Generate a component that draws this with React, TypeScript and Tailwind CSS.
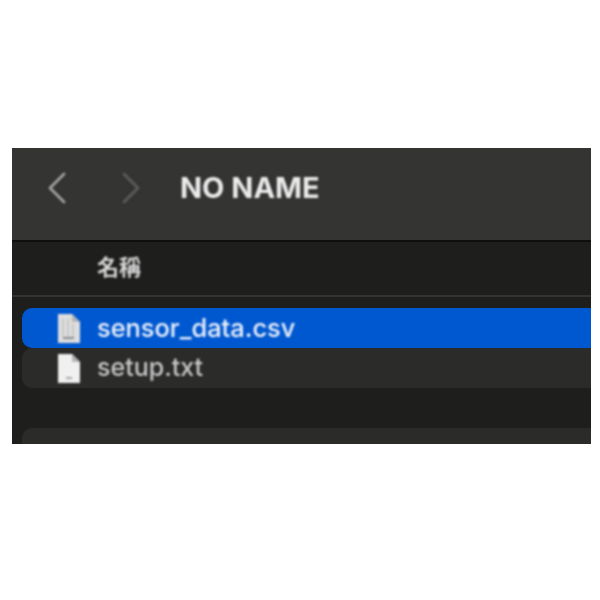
function FileIcon({ csv }: { csv?: boolean }) {
  return (
    <svg width="22" height="29" viewBox="0 0 22 29" className="shrink-0">
      <path d="M0 0h14l8 8v21H0z" fill={csv ? "#dedede" : "#f0f0f0"} />
      <path d="M14 0v8h8z" fill="#b5b5b5" />
      {csv ? (
        <g fill="#c8c8c8">
          <rect x="4" y="5" width="2" height="18" />
          <rect x="9" y="5" width="2" height="18" />
          <rect x="14" y="10" width="2" height="13" />
          <rect x="5" y="23" width="11" height="2" fill="#8c8c8c" />
        </g>
      ) : (
        <rect x="8" y="23" width="6" height="2" fill="#a8a8a8" />
      )}
    </svg>
  );
}

export default function App() {
  return (
    <div className="h-[600px] w-[600px] bg-white pl-[12px] pr-[9px] pt-[148px] font-['Inter','Noto_Sans_CJK_JP',sans-serif]">
      <div className="flex h-[296px] flex-col overflow-hidden bg-[#1e1e1d]">
        <div className="flex h-[92px] shrink-0 items-center bg-[#343433] pb-[12px]">
          <svg width="20" height="32" viewBox="0 0 20 32" className="ml-[35px] blur-[1px]" fill="none" stroke="#a3a3a3" strokeWidth="2.8" strokeLinecap="round" strokeLinejoin="round">
            <path d="M17 2 3 16l14 14" />
          </svg>
          <svg width="20" height="32" viewBox="0 0 20 32" className="ml-[54px] blur-[1px]" fill="none" stroke="#5c5c5b" strokeWidth="2.8" strokeLinecap="round" strokeLinejoin="round">
            <path d="m3 2 14 14L3 30" />
          </svg>
          <span className="ml-[39px] text-[29px] font-bold text-[#ececec] blur-[0.8px]">NO NAME</span>
        </div>
        <div className="h-[2px] shrink-0 bg-[#0f0f0f]" />
        <div className="flex h-[53px] shrink-0 items-center pl-[85px] pb-[3px] text-[22px] font-bold text-[#d6d6d6]">
          <span className="blur-[0.8px]">名稱</span>
        </div>
        <div className="h-[2px] shrink-0 bg-[#333332]" />
        <div className="flex flex-col pl-[10px] pt-[11px]">
          <div className="flex h-[40px] items-center gap-[17px] rounded-l-[10px] bg-[#0058d0] pl-[36px]">
            <span className="blur-[0.8px]"><FileIcon csv /></span>
            <span className="text-[25.4px] font-medium text-[#eef3fb] blur-[0.8px]">sensor_data.csv</span>
          </div>
          <div className="flex h-[40px] items-center gap-[17px] rounded-l-[10px] bg-[#2b2b2a] pl-[36px]">
            <span className="blur-[0.8px]"><FileIcon /></span>
            <span className="text-[25px] font-medium text-[#c8c8c8] blur-[0.8px]">setup.txt</span>
          </div>
          <div className="h-[40px]" />
          <div className="h-[40px] rounded-l-[10px] bg-[#2b2b2a]" />
        </div>
      </div>
    </div>
  );
}
